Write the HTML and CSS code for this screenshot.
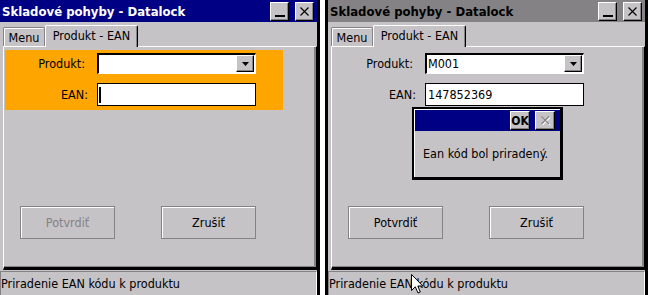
FILE: index.html
```html
<!DOCTYPE html>
<html lang="sk">
<head>
  <meta charset="UTF-8" />
  <title>Skladové pohyby - Datalock</title>
  <link rel="stylesheet" href="styles.css">
</head>
<body>
  <div class="screen">

    <div class="window">
      <div class="titlebar">
        <span class="title">Skladové pohyby - Datalock</span>
        <span class="tbtn"><span class="min-bar"></span></span>
        <span class="tbtn"><svg width="9" height="9" viewBox="0 0 9 9"><path d="M0.5 0.5 L8.5 8.5 M8.5 0.5 L0.5 8.5" stroke="#000" stroke-width="1.1" fill="none"/></svg></span>
      </div>
      <div class="tabs">
        <div class="tab">Menu</div>
        <div class="tab selected">Produkt - EAN</div>
      </div>
      <div class="panel">
        <div class="form orange">
          <div class="row"><label class="short">Produkt:</label>
            <div class="combo"><span class="value"></span><span class="drop"><svg width="7" height="4" viewBox="0 0 7 4"><polygon points="0,0 7,0 3.5,4" fill="#000"/></svg></span></div>
          </div>
          <div class="row"><label>EAN:</label>
            <div class="edit"><span class="caret"></span></div>
          </div>
        </div>
        <div class="buttons">
          <button class="btn" disabled>Potvrdiť</button>
          <button class="btn">Zrušiť</button>
        </div>
      </div>
      <div class="status">Priradenie EAN kódu k produktu</div>
    </div>

    <div class="window inactive">
      <div class="titlebar">
        <span class="title">Skladové pohyby - Datalock</span>
        <span class="tbtn"><span class="min-bar"></span></span>
        <span class="tbtn"><svg width="9" height="9" viewBox="0 0 9 9"><path d="M0.5 0.5 L8.5 8.5 M8.5 0.5 L0.5 8.5" stroke="#000" stroke-width="1.1" fill="none"/></svg></span>
      </div>
      <div class="tabs">
        <div class="tab">Menu</div>
        <div class="tab selected">Produkt - EAN</div>
      </div>
      <div class="panel">
        <div class="form">
          <div class="row"><label class="short">Produkt:</label>
            <div class="combo"><span class="value">M001</span><span class="drop"><svg width="7" height="4" viewBox="0 0 7 4"><polygon points="0,0 7,0 3.5,4" fill="#000"/></svg></span></div>
          </div>
          <div class="row"><label>EAN:</label>
            <div class="edit"><span class="value">147852369</span></div>
          </div>
        </div>
        <div class="buttons">
          <button class="btn">Potvrdiť</button>
          <button class="btn">Zrušiť</button>
        </div>
      </div>
      <div class="status">Priradenie EAN kódu k produktu</div>

      <div class="dialog">
        <div class="dlg-title">
          <span class="tbtn ok">OK</span>
          <span class="tbtn off"><svg width="9" height="9" viewBox="0 0 9 9"><path d="M1.5 1.5 L9 9 M9 1.5 L1.5 9" stroke="#fff" stroke-width="1.1" fill="none"/><path d="M0.5 0.5 L8 8 M8 0.5 L0.5 8" stroke="#848284" stroke-width="1.1" fill="none"/></svg></span>
        </div>
        <div class="dlg-body">Ean kód bol priradený.</div>
      </div>

      <svg class="cursor" width="13" height="21" viewBox="0 0 13 21"><path d="M0.5 0.5 L0.5 16.5 L4.3 12.8 L7 19 L9.3 18 L6.8 12 L11.8 12 Z" fill="#fff" stroke="#000" stroke-width="1"/></svg>
    </div>

  </div>
</body>
</html>
```

FILE: styles.css
```css
* {
  box-sizing: border-box;
}
body {
  margin: 0;
  width: 651px;
  height: 295px;
  overflow: hidden;
  background: #fff;
  font-family: "DejaVu Sans Condensed", "Liberation Sans", sans-serif;
  font-size: 12.5px;
  color: #000;
}
.screen {
  display: flex;
  gap: 5px;
  margin: -3px 0 0 -3px;
}
.window {
  position: relative;
  width: 323px;
  height: 301px;
  border: 3px solid #000;
  background: #c6c3c6;
  display: flex;
  flex-direction: column;
}
.titlebar {
  height: 22px;
  display: flex;
  align-items: center;
  padding: 0 3px 0 2px;
  background: #000084;
  color: #fff;
  font-weight: bold;
  font-size: 13px;
}
.inactive .titlebar {
  background: #848284;
  color: #000;
}
.title {
  flex: 1;
}
.tbtn {
  width: 19px;
  height: 19px;
  margin-left: 6px;
  background: #c6c3c6;
  border: 1px solid;
  border-color: #fff #000 #000 #fff;
  box-shadow: inset -1px -1px #848284;
  display: flex;
  align-items: center;
  justify-content: center;
  position: relative;
}
.min-bar {
  position: absolute;
  left: 4px;
  bottom: 3px;
  width: 10px;
  height: 2px;
  background: #000;
}
.tabs {
  height: 24px;
  display: flex;
  align-items: flex-end;
  padding-left: 3px;
  position: relative;
  z-index: 1;
}
.tab {
  width: 42px;
  height: 19px;
  border: 1px solid #848284;
  border-bottom: none;
  border-radius: 2px 2px 0 0;
  box-shadow: inset 1px 1px #fff;
  text-align: center;
  padding-top: 2px;
}
.tab.selected {
  width: 93px;
  height: 22px;
  margin-bottom: -1px;
  border-color: #fff #000 #000 #fff;
  box-shadow: inset -1px 0 #848284;
  background: #c6c3c6;
  padding-top: 2px;
}
.panel {
  height: 224px;
  margin-left: 3px;
  border-top: 1px solid #fff;
  border-left: 1px solid #fff;
  border-right: 1px solid #000;
  border-bottom: 3px solid #000;
  box-shadow: inset -2px -1px #848284;
  padding: 2px 0 0 1px;
}
.form {
  width: 278px;
  height: 60px;
  margin-top: 1px;
  padding: 3px 0 4px;
}
.orange {
  background: #ffa500;
}
.row {
  display: flex;
  align-items: center;
}
.row + .row {
  margin-top: 9px;
}
label {
  width: 83px;
  text-align: right;
  margin-right: 9px;
}
label.short {
  padding-right: 3px;
}
.combo {
  width: 159px;
  height: 21px;
  background: #fff;
  border: 2px solid #000;
  border-right: 1px solid #fff;
  border-bottom: 1px solid #fff;
  display: flex;
  align-items: flex-start;
}
.value {
  flex: 1;
  padding-left: 1px;
  line-height: 17px;
}
.drop {
  width: 18px;
  height: 17px;
  margin-right: 1px;
  background: #c6c3c6;
  border: 1px solid;
  border-color: #fff #000 #000 #fff;
  box-shadow: inset -1px -1px #848284;
  display: flex;
  align-items: center;
  justify-content: center;
}
.edit {
  width: 159px;
  height: 23px;
  background: #fff;
  border: 1px solid #000;
  display: flex;
  align-items: center;
  padding-left: 1px;
}
.caret {
  width: 2px;
  height: 16px;
  background: #000;
}
.buttons {
  display: flex;
  gap: 46px;
  margin-top: 96px;
  padding-left: 15px;
}
.btn {
  width: 95px;
  height: 33px;
  font: inherit;
  color: #000;
  background: #c6c3c6;
  border: 1px solid #848284;
  box-shadow: inset 1px 1px #fff;
  padding: 0;
}
.btn:disabled {
  color: #848284;
}
.status {
  height: 24px;
  margin-top: 1px;
  border-top: 1px solid #848284;
  border-left: 1px solid #848284;
  border-right: 1px solid #fff;
  display: flex;
  align-items: center;
  white-space: nowrap;
}
.dialog {
  position: absolute;
  left: 84px;
  top: 107px;
  width: 151px;
  height: 73px;
  background: #c6c3c6;
  border: 2px solid #000;
  border-right-width: 3px;
  border-bottom-width: 3px;
  padding: 1px 0 0 1px;
  box-shadow: inset 1px 1px #fff;
}
.dlg-title {
  height: 21px;
  background: #000084;
  display: flex;
  justify-content: flex-end;
  align-items: center;
  padding-right: 5px;
}
.dlg-title .tbtn {
  width: 20px;
  margin-left: 5px;
}
.tbtn.ok {
  font-weight: bold;
  font-size: 12px;
}
.dlg-body {
  height: 45px;
  display: flex;
  align-items: center;
  padding: 0 0 0 8px;
}
.cursor {
  position: absolute;
  left: 83px;
  top: 274px;
}
```
